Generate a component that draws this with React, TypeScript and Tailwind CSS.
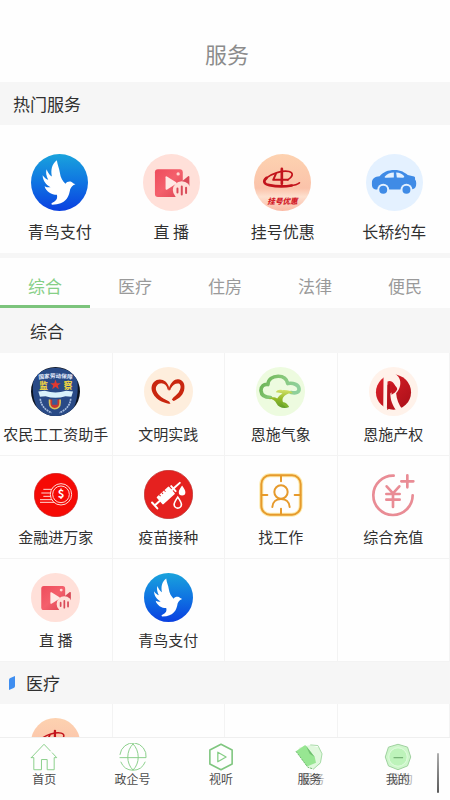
import { useState } from "react";
import type { ReactNode } from "react";
import clsx from "clsx";

/* ---------- service icons ---------- */

const BirdIcon = () => (
  <svg viewBox="0 0 172 172" className="size-full" aria-hidden="true">
    <defs>
      <linearGradient id="bird-bg" x1="0" y1="0" x2="0" y2="1">
        <stop offset="0" stopColor="#1aa3dc" />
        <stop offset="0.5" stopColor="#0f74e2" />
        <stop offset="1" stopColor="#0a3fe0" />
      </linearGradient>
    </defs>
    <circle cx="86" cy="86" r="86" fill="url(#bird-bg)" />
    <path
      fill="#fff"
      d="M78 19C80 34 85 42 87 56C89 72 96 82 104 90C109 81 122 81 127 88L134 91C126 94 121 99 118 107C114 130 106 151 64 153C60 151 61 148 66 146C77 141 81 133 78 123C62 123 45 113 41 97C48 101 54 101 59 100C46 93 36 82 35 64C40 71 46 76 52 78C46 66 44 56 47 46C52 58 57 64 63 68C59 48 63 30 78 19Z"
    />
  </svg>
);

const LiveIcon = () => (
  <svg viewBox="0 0 172 172" className="size-full" aria-hidden="true">
    <defs>
      <linearGradient id="live-cam" x1="0" y1="0" x2="1" y2="1">
        <stop offset="0" stopColor="#ee4c5c" />
        <stop offset="0.5" stopColor="#f4606c" />
        <stop offset="1" stopColor="#dd4654" />
      </linearGradient>
    </defs>
    <circle cx="86" cy="86" r="86" fill="#ffe0d9" />
    <rect x="36" y="46" width="84" height="84" rx="9" fill="url(#live-cam)" />
    <path d="M118 82L136 67Q140 65 140 70V104H118Z" fill="#d94a58" />
    <path d="M68 70Q68 66 72 68L100 85Q103 88 100 90L72 108Q68 109 68 105Z" fill="#ffe9e5" />
    <circle cx="106" cy="60" r="5" fill="#ffd6d2" />
    <circle cx="117" cy="109" r="27" fill="#ffe0d9" />
    <path
      d="M104 104V116M117 98V122M130 102V118"
      stroke="#d94a58"
      strokeWidth="6"
      strokeLinecap="round"
    />
  </svg>
);

const RegisterIcon = () => (
  <svg viewBox="0 0 172 172" className="size-full" aria-hidden="true">
    <defs>
      <linearGradient id="register-bg" x1="0" y1="0" x2="0" y2="1">
        <stop offset="0" stopColor="#fdd2b0" />
        <stop offset="0.6" stopColor="#fbc3aa" />
        <stop offset="0.75" stopColor="#fde0cf" />
        <stop offset="1" stopColor="#fbb9a4" />
      </linearGradient>
    </defs>
    <circle cx="86" cy="86" r="86" fill="url(#register-bg)" />
    <g fill="none" stroke="#c2131b" strokeLinecap="round">
      <path strokeWidth="5" d="M102 78C118 68 120 57 106 53C86 48 52 60 38 72" />
      <path strokeWidth="8" d="M38 72C26 82 30 91 46 94C66 98 96 98 114 95" />
      <path strokeWidth="5" d="M110 95C124 94 132 91 137 87" />
      <path strokeWidth="6" strokeLinejoin="round" d="M66 60L58 78H102" />
      <path strokeWidth="8" d="M84 45V90" />
    </g>
    <text
      x="86"
      y="151"
      textAnchor="middle"
      fontSize="23"
      fontWeight="900"
      fontStyle="italic"
      fill="#d3202a"
    >
      挂号优惠
    </text>
  </svg>
);

const CarIcon = () => (
  <svg viewBox="0 0 172 172" className="size-full" aria-hidden="true">
    <circle cx="86" cy="86" r="86" fill="#e4f1ff" />
    <path
      fill="#3f8be6"
      d="M18 84C19 74 27 68 41 67C52 54 66 48 86 48C106 48 117 56 126 63L145 68C149 69 148 73 148 77C153 82 152 94 150 99C148 105 142 107 134 107H30C20 106 17 100 18 84Z"
    />
    <path
      fill="#e4f1ff"
      d="M57 68C64 60 73 56 84 56V71L62 72C57 72 55 70 57 68ZM91 56C102 56 109 61 114 66C117 70 115 72 111 72L93 71Z"
    />
    <circle cx="52" cy="108" r="18" fill="#e4f1ff" />
    <circle cx="122" cy="108" r="18" fill="#e4f1ff" />
    <circle cx="52" cy="108" r="12" fill="#3f8be6" />
    <circle cx="122" cy="108" r="12" fill="#3f8be6" />
  </svg>
);

const BadgeIcon = () => (
  <svg viewBox="0 0 148 148" className="size-full" aria-hidden="true">
    <defs>
      <clipPath id="badge-clip">
        <circle cx="74" cy="74" r="74" />
      </clipPath>
      <path id="badge-arc" d="M16 38Q74 28 132 38" />
    </defs>
    <g clipPath="url(#badge-clip)">
      <rect width="148" height="148" fill="#0d1420" />
      <path
        fill="#294a86"
        d="M10 26Q74 -22 138 26C144 60 142 96 128 126Q104 148 74 150Q44 148 20 126C4 96 2 60 10 26Z"
      />
      <text fontSize="17" fontWeight="700" fill="#e8eefc" textAnchor="middle">
        <textPath href="#badge-arc" startOffset="50%">
          国家劳动保障
        </textPath>
      </text>
      <text x="38" y="66" fontSize="26" fontWeight="900" fill="#e9cf45" textAnchor="middle">
        监
      </text>
      <text x="112" y="66" fontSize="26" fontWeight="900" fill="#e9cf45" textAnchor="middle">
        察
      </text>
      <path
        fill="#e0392f"
        d="M74 38L78 49H90L81 56L84 67L74 60L64 67L67 56L58 49H70Z"
      />
      <path fill="#d9f1fb" d="M22 74L42 72Q74 82 106 72L127 74L122 90L104 88Q74 98 44 88L27 90Z" />
      <path
        fill="#c8372f"
        stroke="#d8c25a"
        strokeWidth="5"
        d="M56 98V108C56 120 64 126 72 126C80 126 88 120 88 108V98"
      />
      <path d="M64 97H80V114H64Z" fill="#3d5a96" />
      <path
        d="M28 96C30 118 46 132 62 138M120 96C118 118 102 132 86 138"
        fill="none"
        stroke="#a9bfe0"
        strokeWidth="5"
        strokeDasharray="6 2"
      />
    </g>
  </svg>
);

const HeartIcon = () => (
  <svg viewBox="0 0 148 148" className="size-full" aria-hidden="true">
    <circle cx="74" cy="74" r="74" fill="#feeedd" />
    <path
      fill="#c9260f"
      d="M76 62C70 38 45 30 30 45C12 65 31 94 53 104C65 109 73 111 80 111L76 104C62 98 42 87 37 72C33 59 42 49 52 49C63 50 68 56 70 63C72 71 78 72 81 65C86 54 97 48 105 50C113 54 112 66 105 76C99 84 91 88 84 98L89 103C101 98 116 89 121 71C126 51 117 38 103 37C92 36 82 46 76 62Z"
    />
    <circle cx="76" cy="66" r="4" fill="none" stroke="#d8503c" strokeWidth="2" />
  </svg>
);

const WeatherIcon = () => (
  <svg viewBox="0 0 148 148" className="size-full" aria-hidden="true">
    <defs>
      <linearGradient id="weather-cloud" x1="0" y1="0" x2="1" y2="0.3">
        <stop offset="0" stopColor="#66b04f" />
        <stop offset="0.5" stopColor="#86c777" />
        <stop offset="1" stopColor="#8ed09a" />
      </linearGradient>
      <linearGradient id="weather-tree" x1="0" y1="0" x2="0" y2="1">
        <stop offset="0" stopColor="#d4e26a" />
        <stop offset="0.5" stopColor="#93b927" />
        <stop offset="1" stopColor="#5f9e2a" />
      </linearGradient>
    </defs>
    <circle cx="74" cy="74" r="74" fill="#edfbdf" />
    <path
      fill="none"
      stroke="url(#weather-cloud)"
      strokeWidth="11"
      strokeLinecap="round"
      strokeLinejoin="round"
      d="M44 92C26 92 16 84 15 71C15 58 24 51 36 53C37 37 50 28 67 28C83 28 93 36 96 50C112 47 129 53 130 66C131 77 120 80 106 77"
    />
    <path
      fill="url(#weather-tree)"
      d="M60 76C64 69 72 67 80 70C92 69 106 71 112 80C98 78 88 84 82 92C76 102 84 114 100 121C84 128 68 122 62 110C58 102 50 96 38 96C46 89 58 90 64 95C68 88 74 84 80 80C74 77 68 78 60 76Z"
    />
    <path fill="#7fb52e" d="M78 108C84 104 92 108 100 120C90 122 82 118 78 108Z" />
  </svg>
);

const PropertyIcon = () => (
  <svg viewBox="0 0 148 148" className="size-full" aria-hidden="true">
    <defs>
      <linearGradient id="property-red" x1="0" y1="0" x2="1" y2="1">
        <stop offset="0" stopColor="#e0222a" />
        <stop offset="1" stopColor="#a80f18" />
      </linearGradient>
    </defs>
    <circle cx="74" cy="74" r="74" fill="#fff2ea" />
    <circle cx="74" cy="76" r="53" fill="url(#property-red)" />
    <path
      fill="#fff2ea"
      d="M44 20H76C90 26 97 40 94 56C92 66 88 73 82 79C83 96 90 114 101 128L84 134C72 118 64 98 64 80C74 76 80 66 79 56C72 42 62 40 56 44L54 130H43Z"
    />
    <path fill="#b5131c" d="M56 54L64 50V124L55 130Z" />
    <path fill="#c5161f" d="M68 52C78 54 86 60 85 68C82 76 74 80 68 84Z" />
  </svg>
);

const FinanceIcon = () => (
  <svg viewBox="0 0 132 132" className="size-11" aria-hidden="true">
    <circle cx="66" cy="66" r="65" fill="#f60a05" stroke="#c91a16" strokeWidth="2" />
    <g fill="none" stroke="#ffd9d4" strokeWidth="3">
      <circle cx="81" cy="64" r="32" />
      <circle cx="81" cy="64" r="25" />
      <path d="M28 49H54M22 60H50M28 70H50M18 80H54M18 88H60" />
    </g>
    <text x="81" y="76" textAnchor="middle" fontSize="34" fontWeight="700" fill="#fff">
      $
    </text>
  </svg>
);

const VaccineIcon = () => (
  <svg viewBox="0 0 148 148" className="size-full" aria-hidden="true">
    <circle cx="74" cy="74" r="73" fill="#e5211f" stroke="#b92a28" strokeWidth="2" />
    <g transform="rotate(-42 68 75)">
      <rect x="40" y="60" width="50" height="30" rx="3" fill="#fff" />
      <path
        d="M40 75H22M20 63V87M90 75H102M96 65V85M102 75H122"
        stroke="#fff"
        strokeWidth="6"
        strokeLinecap="round"
      />
      <path d="M52 60V66M62 60V66M72 60V66" stroke="#e5211f" strokeWidth="3" />
    </g>
    <path d="M115 47C121 56 125 61 125 67A10 10 0 0 1 105 67C105 61 109 56 115 47Z" fill="#fff" />
    <path
      d="M102 82C109 92 113 98 113 104A11 11 0 0 1 91 104C91 98 95 92 102 82Z"
      fill="none"
      stroke="#fff"
      strokeWidth="5"
    />
  </svg>
);

const JobIcon = () => (
  <svg viewBox="0 0 132 132" className="size-11" aria-hidden="true">
    <rect x="7" y="7" width="118" height="118" rx="26" fill="none" stroke="#fde9a8" strokeWidth="12" />
    <g fill="none" stroke="#e69a2c" strokeWidth="6" strokeLinecap="round">
      <rect x="7" y="7" width="118" height="118" rx="26" />
      <path d="M66 8V25M66 107V124M8 66H25M107 66H124" />
      <circle cx="66" cy="57" r="20" />
      <path d="M40 102C41 86 52 78 66 78C80 78 91 86 92 102" />
    </g>
  </svg>
);

const RechargeIcon = () => (
  <svg viewBox="0 0 132 132" className="size-11" aria-hidden="true">
    <g fill="none" stroke="#e98c95" strokeWidth="8" strokeLinecap="round">
      <path d="M68 8A59 59 0 1 0 125 67" />
      <path d="M47 40L66 61L85 40M66 61V102M46 63H86M46 80H86" />
      <path d="M109 7V43M91 25H127" />
    </g>
  </svg>
);

/* ---------- tab bar icons ---------- */

const HomeIcon = () => (
  <svg viewBox="0 0 88 88" className="size-7" aria-hidden="true">
    <g fill="none" stroke="#86ce86" strokeWidth="3" strokeLinejoin="round" strokeLinecap="round">
      <path d="M4 46L44 4L64 25M70 31L84 46H76V84H54V52H36V84H12V46H4" />
    </g>
  </svg>
);

const GlobeIcon = () => (
  <svg viewBox="0 0 88 88" className="size-7" aria-hidden="true">
    <g fill="none" stroke="#86ce86" strokeWidth="3" strokeLinecap="round">
      <path d="M3 36A41 41 0 0 1 85 46H3M6 60A41 41 0 0 0 82 60" />
      <path d="M44 3C22 24 22 64 44 85C66 64 66 24 44 3Z" />
    </g>
  </svg>
);

const PlayIcon = () => (
  <svg viewBox="0 0 88 88" className="size-7" aria-hidden="true">
    <g fill="none" strokeLinejoin="round">
      <path stroke="#7fc67f" strokeWidth="5" d="M44 4L79 22V66L44 84L9 66V22Z" />
      <path stroke="#86ce86" strokeWidth="4" d="M34 29L60 44L34 59Z" />
    </g>
  </svg>
);

const ServiceIcon = () => (
  <svg viewBox="0 0 88 88" className="size-7" aria-hidden="true">
    <path d="M48 6L76 14L85 34L80 66L58 82L44 80L6 30L14 14Z" fill="#e0f8dd" />
    <path d="M48 6L72 8L85 34L80 62L58 82" fill="none" stroke="#a3d8a3" strokeWidth="3" />
    <path d="M3 26L32 6L62 44L66 62L38 74Z" fill="#97e692" />
    <path d="M34 8L62 44L46 34Z" fill="#6fbf6f" />
    <path d="M3 26L40 76L58 82" fill="none" stroke="#6fb86f" strokeWidth="3" strokeDasharray="7 3" />
  </svg>
);

const MineIcon = () => (
  <svg viewBox="0 0 88 88" className="size-7" aria-hidden="true">
    <path
      d="M44 4L74 13L84 44L74 72L44 84L14 72L4 44L14 13Z"
      fill="#cdf6ca"
      stroke="#9ccf9c"
      strokeWidth="3"
      strokeLinejoin="round"
    />
    <circle cx="44" cy="44" r="29" fill="#bdf3ba" stroke="#e3fbe1" strokeWidth="3" />
    <path d="M30 46H60" stroke="#78b478" strokeWidth="4" />
  </svg>
);

/* ---------- data ---------- */

type Service = { label: string; icon: ReactNode };

const hotServices: Service[] = [
  { label: "青鸟支付", icon: <BirdIcon /> },
  { label: "直 播", icon: <LiveIcon /> },
  { label: "挂号优惠", icon: <RegisterIcon /> },
  { label: "长轿约车", icon: <CarIcon /> },
];

const tabs = ["综合", "医疗", "住房", "法律", "便民"];

const generalServices: Service[] = [
  { label: "农民工工资助手", icon: <BadgeIcon /> },
  { label: "文明实践", icon: <HeartIcon /> },
  { label: "恩施气象", icon: <WeatherIcon /> },
  { label: "恩施产权", icon: <PropertyIcon /> },
  { label: "金融进万家", icon: <FinanceIcon /> },
  { label: "疫苗接种", icon: <VaccineIcon /> },
  { label: "找工作", icon: <JobIcon /> },
  { label: "综合充值", icon: <RechargeIcon /> },
  { label: "直 播", icon: <LiveIcon /> },
  { label: "青鸟支付", icon: <BirdIcon /> },
];

const medicalServices: Service[] = [{ label: "挂号优惠", icon: <RegisterIcon /> }];

const navItems = [
  { label: "首页", icon: <HomeIcon /> },
  { label: "政企号", icon: <GlobeIcon /> },
  { label: "视听", icon: <PlayIcon /> },
  { label: "服务", icon: <ServiceIcon />, ghost: true },
  { label: "我的", icon: <MineIcon />, ghost: true },
];

/* ---------- layout ---------- */

const ServiceGrid = ({ items, iconOnly }: { items: Service[]; iconOnly?: boolean }) => {
  // fill the last row up with blank cells so the grid lines stay complete
  const blanks = (4 - (items.length % 4)) % 4;

  return (
    <div className="grid grid-cols-4">
      {items.map((item) => (
        <button
          key={item.label}
          aria-label={item.label}
          className="flex h-[103px] flex-col items-center border-b border-r border-[#f3f3f3] pt-[14px]"
        >
          <span className="flex size-[49px] items-center justify-center">{item.icon}</span>
          {!iconOnly && (
            <span className="mt-[6px] whitespace-nowrap text-[15px] leading-6">{item.label}</span>
          )}
        </button>
      ))}
      {Array.from({ length: blanks }, (_, i) => (
        <div key={i} className="h-[103px] border-b border-r border-[#f3f3f3]" />
      ))}
    </div>
  );
};

const App = () => {
  const [activeTab, setActiveTab] = useState("综合");

  return (
    <div className="flex h-screen flex-col bg-[#fefefe] font-['Noto_Sans_CJK_SC',sans-serif] text-[#303030]">
      <header className="flex h-[82px] shrink-0 items-center justify-center pl-1 pt-6">
        <h1 className="text-[22px] leading-8 text-[#8c8c8c]">服务</h1>
      </header>

      <main className="min-h-0 flex-1 overflow-y-auto [scrollbar-width:none]">
        <h2 className="flex h-[43px] items-center bg-[#f6f6f6] pl-[13px] text-[17px]">热门服务</h2>
        <div className="grid grid-cols-4 border-b-[5px] border-[#f6f6f6] pb-[10px] pl-1 pt-[29px]">
          {hotServices.map((item) => (
            <button key={item.label} className="flex flex-col items-center">
              <span className="size-[57px]">{item.icon}</span>
              <span className="mt-2 whitespace-nowrap text-base leading-6">{item.label}</span>
            </button>
          ))}
        </div>

        <div role="tablist" className="grid grid-cols-5">
          {tabs.map((tab) => (
            <button
              key={tab}
              role="tab"
              aria-selected={tab === activeTab}
              onClick={() => setActiveTab(tab)}
              className={clsx(
                "h-[50px] border-b-[3px] pt-2 text-[17px]",
                tab === activeTab
                  ? "border-[#7cc47c] text-[#86cf86]"
                  : "border-transparent text-[#9a9a9a]",
              )}
            >
              {tab}
            </button>
          ))}
        </div>

        <h2 className="flex h-[45px] items-center bg-[#f6f6f6] pl-[30px] text-[17px]">综合</h2>
        <ServiceGrid items={generalServices} />

        <h2 className="flex h-[42px] items-center gap-[11px] bg-[#f6f6f6] pl-[9px] text-[17px]">
          <svg viewBox="0 0 18 42" className="h-[14px] w-[6px]" aria-hidden="true">
            <path d="M0 12Q0 8 4 6L18 0V30Q18 34 14 36L0 42Z" fill="#3f8ef0" />
          </svg>
          医疗
        </h2>
        <ServiceGrid items={medicalServices} iconOnly />
      </main>

      <nav className="relative grid h-[63px] shrink-0 grid-cols-5 border-t border-[#efefef] pr-2 pt-[5px]">
        {navItems.map((item) => (
          <a key={item.label} href="#" className="flex flex-col items-center text-[#4c4c4c]">
            {item.icon}
            <span
              className={clsx(
                "text-xs leading-4",
                item.ghost && "[text-shadow:3px_0_0_#b4b4b4]",
              )}
            >
              {item.label}
            </span>
          </a>
        ))}
        <span className="absolute right-[11px] top-[15px] h-10 w-[2px] rounded-full bg-linear-to-b from-[#b0b0b0] to-[#5a5a5a]" />
      </nav>
    </div>
  );
};

export default App;
